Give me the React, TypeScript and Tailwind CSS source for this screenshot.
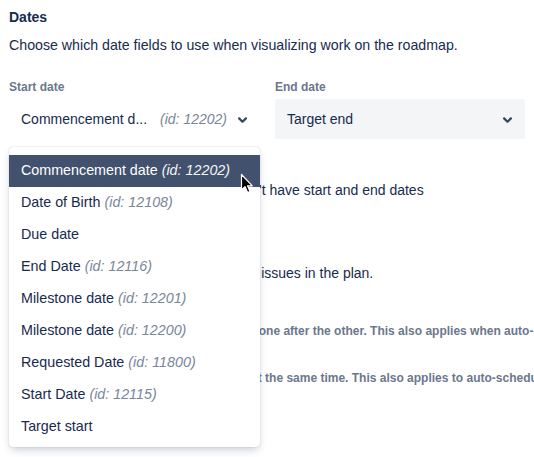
import React from "react";

const Chevron = ({ className = "" }: { className?: string }) => (
  <svg width="27" height="27" viewBox="0 0 24 24" className={className} aria-hidden>
    <path
      fill="currentColor"
      fillRule="evenodd"
      d="M8.292 10.293a1.009 1.009 0 000 1.419l2.939 2.965c.218.215.5.322.779.322s.556-.107.769-.322l2.93-2.955a1.01 1.01 0 000-1.419.987.987 0 00-1.406 0l-2.298 2.317-2.307-2.327a.99.99 0 00-1.406 0z"
    />
  </svg>
);

const options: { name: string; id?: string }[] = [
  { name: "Commencement date", id: "12202" },
  { name: "Date of Birth", id: "12108" },
  { name: "Due date" },
  { name: "End Date", id: "12116" },
  { name: "Milestone date", id: "12201" },
  { name: "Milestone date", id: "12200" },
  { name: "Requested Date", id: "11800" },
  { name: "Start Date", id: "12115" },
  { name: "Target start" },
];

export default function App() {
  return (
    <div
      className="relative w-[534px] h-[457px] overflow-hidden bg-white px-[9px] pt-[7px] text-[14px] text-[#172B4D]"
      style={{ fontFamily: '"Liberation Sans", Arial, sans-serif' }}
    >
      <h3 className="text-[14px] leading-5 font-bold">Dates</h3>
      <p className="mt-2 leading-5 whitespace-nowrap text-[14.2px]">
        Choose which date fields to use when visualizing work on the roadmap.
      </p>

      <div className="mt-[24px] flex gap-4">
        <div className="w-[250px]">
          <div className="text-[12px] leading-4 font-bold text-[#6B778C]">Start date</div>
          <div className="relative mt-1">
            <div className="flex h-10 items-center rounded-[3px] pl-3">
              <span className="whitespace-nowrap">Commencement d...</span>
              <span className="ml-[13px] whitespace-nowrap italic text-[#7A869A]">(id: 12202)</span>
              <Chevron className="ml-[2px] text-[#344563]" />
            </div>
            <div className="absolute left-0 top-[48px] z-10 w-[251px] rounded-[4px] bg-white pt-2 pb-1 shadow-[0_4px_8px_-2px_rgba(9,30,66,0.25),0_0_1px_rgba(9,30,66,0.31)]">
              {options.map((o, i) => (
                <div
                  key={i}
                  className={
                    i === 0
                      ? "flex h-8 items-center whitespace-nowrap bg-[#42526E] px-3 text-white text-[14.3px]"
                      : "flex h-8 items-center whitespace-nowrap px-3 text-[#172B4D] text-[14.3px]"
                  }
                >
                  <span>{o.name}</span>
                  {o.id && (
                    <span className={i === 0 ? "ml-[4px] italic text-[#F4F5F7]" : "ml-[4px] italic text-[#7A869A]"}>
                      (id: {o.id})
                    </span>
                  )}
                </div>
              ))}
            </div>
          </div>
        </div>
        <div className="w-[250px]">
          <div className="text-[12px] leading-4 font-bold text-[#6B778C]">End date</div>
          <div className="mt-1 flex h-10 items-center justify-between rounded-[3px] bg-[#F4F5F7] pl-3 pr-[4px]">
            <span>Target end</span>
            <Chevron className="text-[#344563]" />
          </div>
        </div>
      </div>

      <p className="mt-[41px] leading-5 whitespace-nowrap pl-[117px]">
        Show issues that don't have start and end dates
      </p>

      <p className="mt-[63px] leading-5 whitespace-nowrap">
        Set how dependencies behave between issues in the plan.
      </p>

      <p className="mt-[40px] text-[12px] leading-4 font-bold whitespace-nowrap text-[#6B778C] pl-[41px]">
        Dependent issues will be scheduled one after the other. This also applies when auto-scheduling.
      </p>
      <p className="mt-[31px] text-[12px] leading-4 font-bold whitespace-nowrap text-[#6B778C] pl-[32px]">
        Dependent issues can be scheduled at the same time. This also applies to auto-scheduling.
      </p>

      <svg
        className="absolute left-[240px] top-[173px] z-20"
        width="14"
        height="21"
        viewBox="0 0 14 21"
        aria-hidden
      >
        <path
          d="M1.5 1.5 L1.5 17 L5 13.6 L7.6 19.5 L10 18.5 L7.5 12.8 L12.3 12.8 Z"
          fill="#000"
          stroke="#fff"
          strokeWidth="1.2"
          strokeLinejoin="round"
        />
      </svg>
    </div>
  );
}
